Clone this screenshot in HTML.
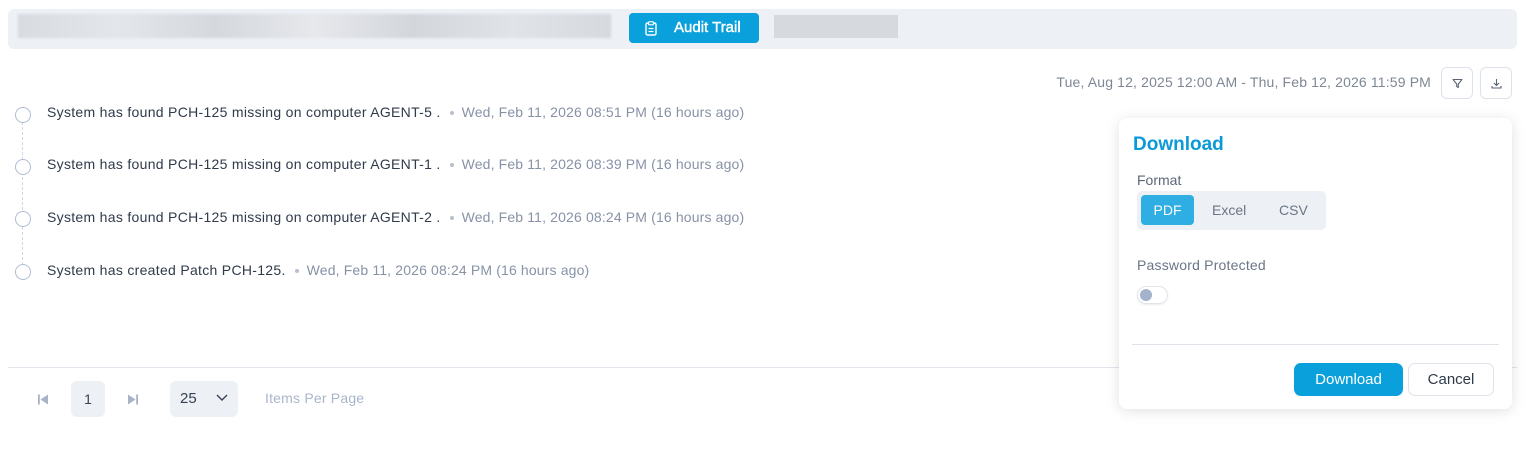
<!DOCTYPE html>
<html><head><meta charset="utf-8"><style>
*{margin:0;padding:0;box-sizing:border-box}
body{width:1525px;height:453px;background:#fff;font-family:"Liberation Sans",sans-serif;position:relative;overflow:hidden;color:#364152}
.a{position:absolute}
.row{position:absolute;left:47px;font-size:14px;white-space:nowrap;color:#2f3a4a;letter-spacing:0.3px}
.row .d{color:#8792a6;margin-left:8px;letter-spacing:0.15px}
.row .dot{display:inline-block;width:4px;height:4px;background:#b8c0cc;border-radius:50%;vertical-align:middle;margin-left:9px}
.c{position:absolute;left:15px;width:16px;height:16px;border:1.5px solid #aebdd2;border-radius:50%;background:#fff}
</style></head><body>
<div class="a" style="left:8px;top:9px;width:1509px;height:40px;background:#edf0f5;border-radius:6px"></div>
<div class="a" style="left:18px;top:14px;width:593px;height:24px;background:linear-gradient(90deg,#d8dbe0,#e3e6ea,#d5d8dd,#e6e8ec,#d3d6db,#e0e3e7,#d6d9de);filter:blur(1px)"></div>
<div class="a" style="left:774px;top:15px;width:124px;height:23px;background:#d6d9de"></div>
<div class="a" style="left:629px;top:13px;width:130px;height:30px;background:#0aa0dc;border-radius:4px;color:#fff;font-size:15px;line-height:30px">
<svg class="a" style="left:16px;top:8px" width="12" height="15" viewBox="0 0 12 15"><rect x="1" y="2" width="10" height="12" rx="1.5" fill="none" stroke="#fff" stroke-width="1.4"/><rect x="3.5" y="0.8" width="5" height="3" rx="0.8" fill="#0aa0dc" stroke="#fff" stroke-width="1.2"/><path d="M3.5 7.5h5M3.5 10.5h5" stroke="#fff" stroke-width="1.2"/></svg>
<span style="position:absolute;left:45px;-webkit-text-stroke:0.4px #fff">Audit Trail</span></div>

<div class="a" style="right:94px;top:74px;font-size:14px;color:#7e8796;white-space:nowrap;letter-spacing:0.15px">Tue, Aug 12, 2025 12:00 AM - Thu, Feb 12, 2026 11:59 PM</div>
<div class="a" style="left:1441px;top:67px;width:32px;height:32px;border:1px solid #dde2ea;border-radius:6px">
<svg class="a" style="left:10px;top:10px" width="11" height="11" viewBox="0 0 11 11"><path d="M1 1.5h9L6.3 6v3.5L4.7 8.5V6z" fill="none" stroke="#5a6474" stroke-width="1.1" stroke-linejoin="round"/></svg></div>
<div class="a" style="left:1480px;top:67px;width:32px;height:32px;border:1px solid #dde2ea;border-radius:6px">
<svg class="a" style="left:10px;top:10px" width="11" height="11" viewBox="0 0 11 11"><path d="M5.5 1v6M3 5l2.5 2.5L8 5M1 8v2h9V8" fill="none" stroke="#5a6474" stroke-width="1.1"/></svg></div>

<div class="a" style="left:22px;top:122px;height:143px;border-left:1px dashed #cfd7e3"></div>
<div class="c" style="top:107px"></div><div class="c" style="top:159px"></div><div class="c" style="top:211px"></div><div class="c" style="top:264px"></div>
<div class="row" style="top:104px">System has found PCH-125 missing on computer AGENT-5 .<span class="dot"></span><span class="d">Wed, Feb 11, 2026 08:51 PM (16 hours ago)</span></div>
<div class="row" style="top:156px">System has found PCH-125 missing on computer AGENT-1 .<span class="dot"></span><span class="d">Wed, Feb 11, 2026 08:39 PM (16 hours ago)</span></div>
<div class="row" style="top:209px">System has found PCH-125 missing on computer AGENT-2 .<span class="dot"></span><span class="d">Wed, Feb 11, 2026 08:24 PM (16 hours ago)</span></div>
<div class="row" style="top:262px">System has created Patch PCH-125.<span class="dot"></span><span class="d">Wed, Feb 11, 2026 08:24 PM (16 hours ago)</span></div>

<div class="a" style="left:8px;top:367px;width:1509px;height:1px;background:#e2e5ec"></div>
<svg class="a" style="left:37px;top:394px" width="12" height="11" viewBox="0 0 12 11"><rect x="1" y="0.5" width="1.8" height="10" fill="#a7b4c8"/><path d="M11 0.5v10L3.5 5.5z" fill="#a7b4c8"/></svg>
<div class="a" style="left:71px;top:381px;width:34px;height:36px;background:#edf0f5;border-radius:6px;text-align:center;line-height:36px;font-size:14px;color:#364152">1</div>
<svg class="a" style="left:127px;top:394px" width="12" height="11" viewBox="0 0 12 11"><path d="M1 0.5v10L8.5 5.5z" fill="#a7b4c8"/><rect x="9.2" y="0.5" width="1.8" height="10" fill="#a7b4c8"/></svg>
<div class="a" style="left:170px;top:381px;width:68px;height:36px;background:#edf0f5;border-radius:6px;font-size:15px;line-height:36px;color:#364152;padding-left:10px">25
<svg class="a" style="left:46px;top:13px" width="12" height="8" viewBox="0 0 12 8"><path d="M1 1l5 5 5-5" fill="none" stroke="#364152" stroke-width="1.4"/></svg></div>
<div class="a" style="left:265px;top:390px;font-size:14px;color:#a9b6ca;letter-spacing:0.2px">Items Per Page</div>

<div class="a" style="left:1119px;top:118px;width:393px;height:291px;background:#fff;border-radius:8px;box-shadow:0 2px 14px rgba(0,0,0,0.12)">
<div class="a" style="left:14px;top:16px;font-size:19px;font-weight:bold;color:#0a9ad8">Download</div>
<div class="a" style="left:18px;top:54px;font-size:14px;color:#5c6676">Format</div>
<div class="a" style="left:18px;top:73px;width:189px;height:39px;background:#edf0f5;border-radius:5px;font-size:14px;color:#6b7585">
<div class="a" style="left:4px;top:4px;width:53px;height:30px;background:#2eaee2;border-radius:4px;color:#fff;text-align:center;line-height:30px">PDF</div>
<div class="a" style="left:75px;top:11px">Excel</div><div class="a" style="left:142px;top:11px">CSV</div></div>
<div class="a" style="left:18px;top:139px;font-size:14px;color:#6b7585;letter-spacing:0.2px">Password Protected</div>
<div class="a" style="left:18px;top:168px;width:31px;height:18px;border:1px solid #e1e5eb;border-radius:9px;box-shadow:0 1px 2px rgba(0,0,0,.08)"><div class="a" style="left:2px;top:2px;width:12px;height:12px;border-radius:50%;background:#a3b3cc"></div></div>
<div class="a" style="left:13px;top:226px;width:367px;height:1px;background:#dfe3e9"></div>
<div class="a" style="left:175px;top:245px;width:109px;height:33px;background:#0aa0dc;border-radius:7px;color:#fff;font-size:15px;text-align:center;line-height:33px">Download</div>
<div class="a" style="left:289px;top:245px;width:86px;height:33px;border:1px solid #dfe3e9;border-radius:7px;color:#2f3a4a;font-size:15px;text-align:center;line-height:31px">Cancel</div>
</div>
</body></html>
